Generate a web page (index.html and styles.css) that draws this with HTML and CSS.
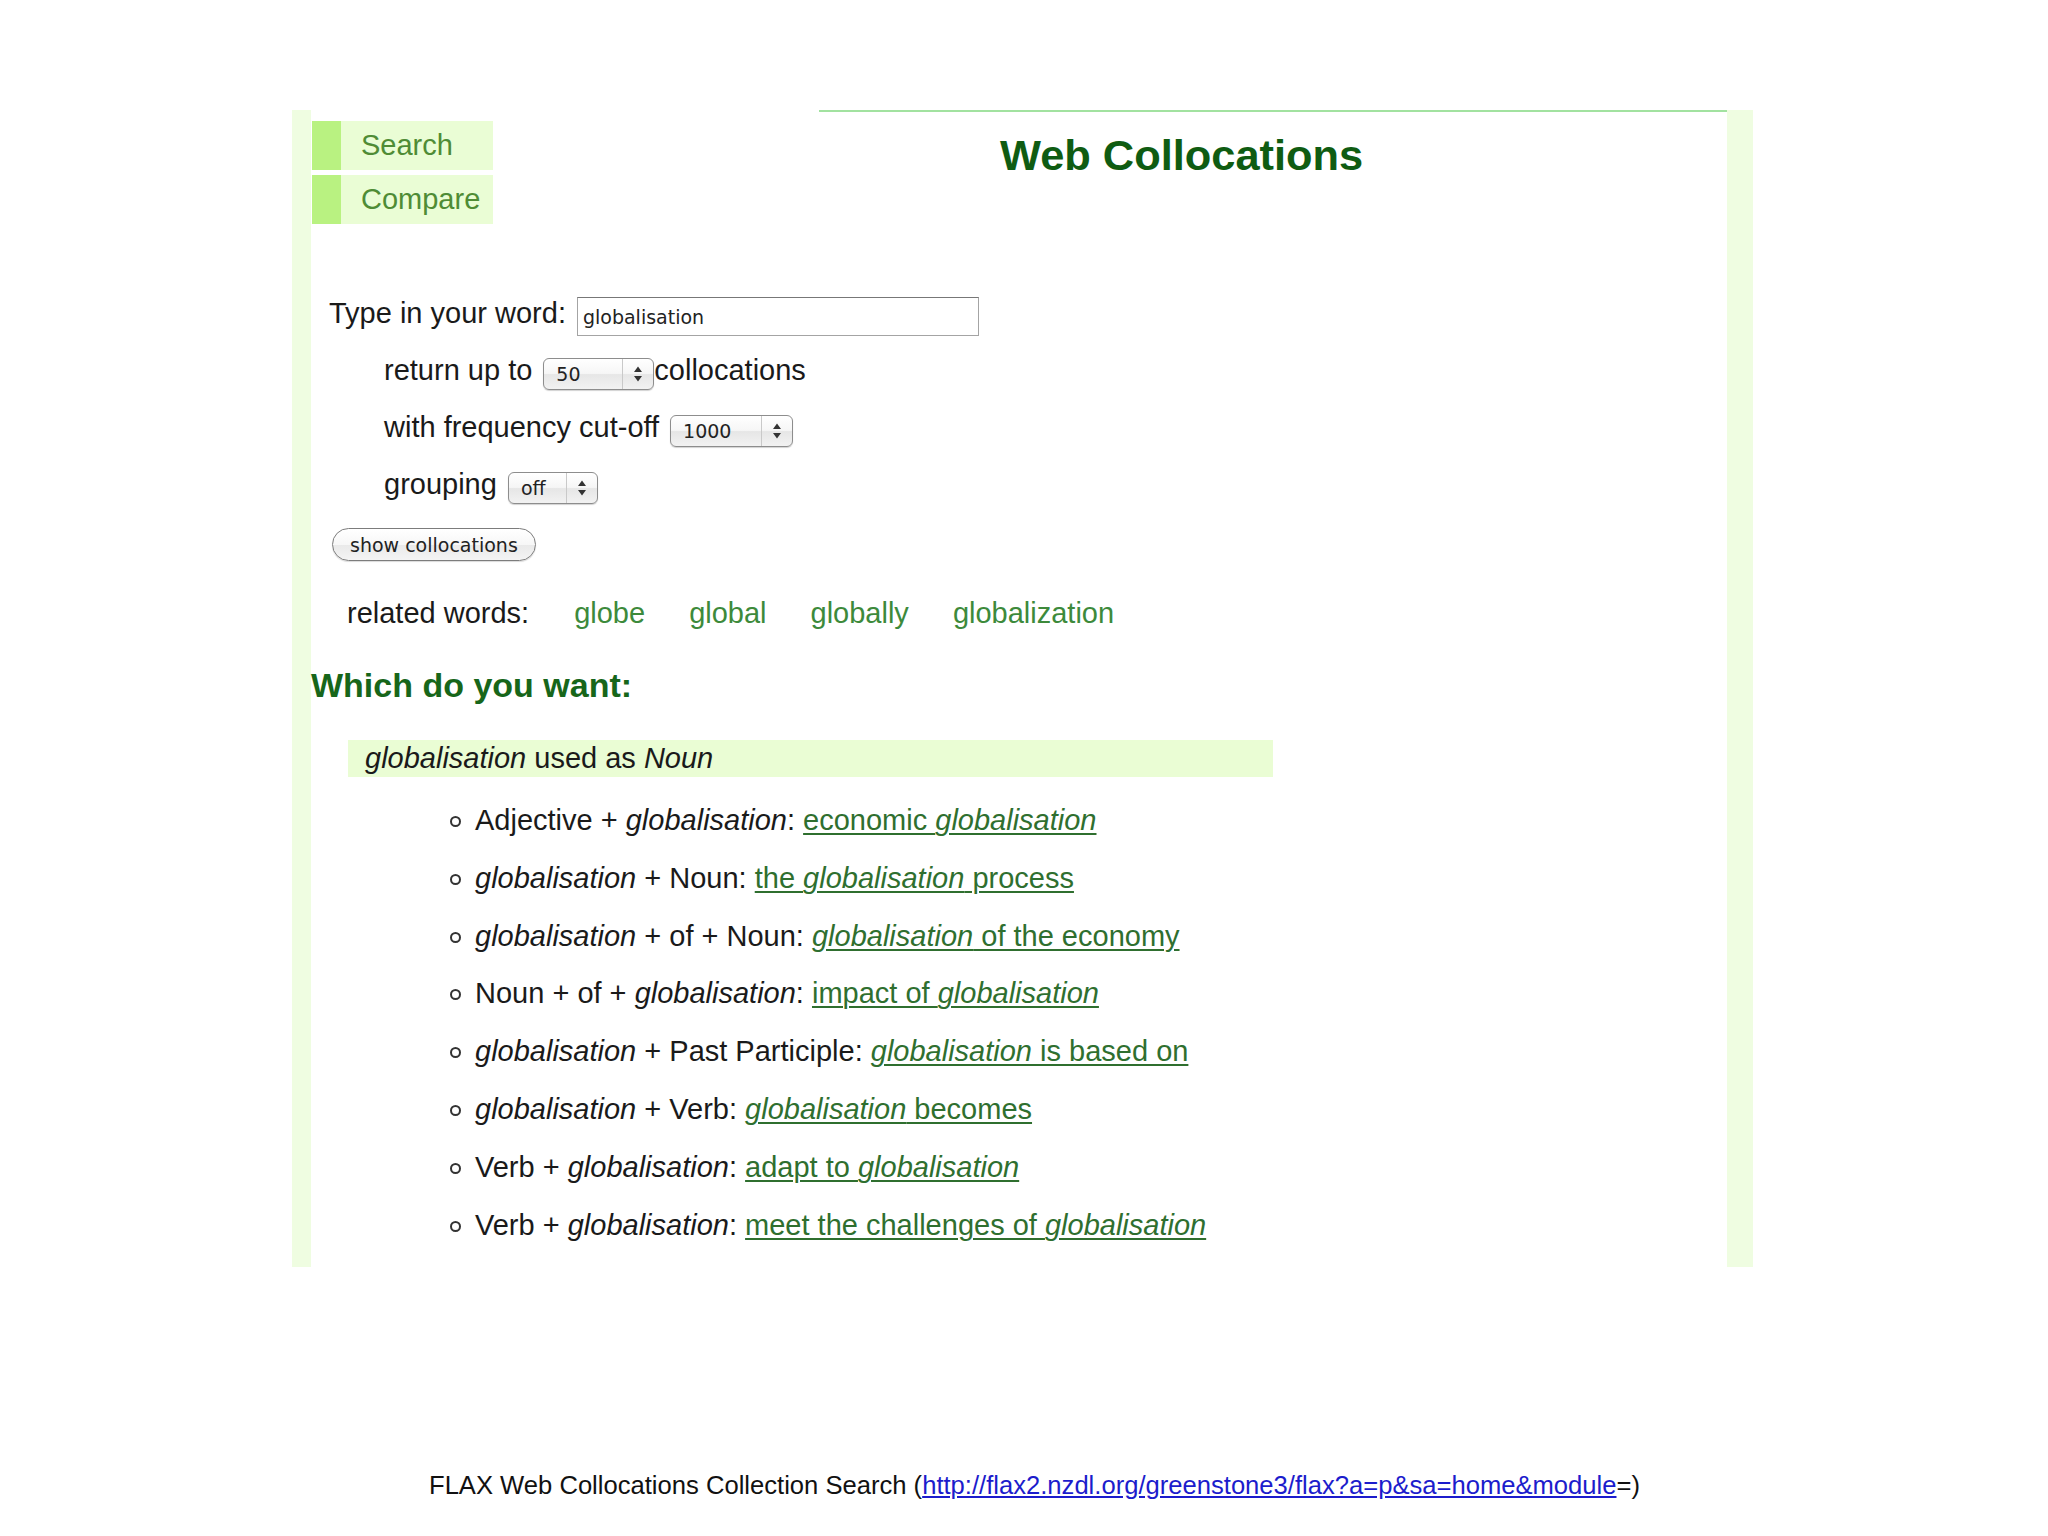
FILE: index.html
```html
<!DOCTYPE html>
<html lang="en">
<head>
<meta charset="utf-8">
<title>Web Collocations</title>
<link rel="stylesheet" href="styles.css">
</head>
<body>
<div class="frame">
  <div class="strip strip-left"></div>
  <div class="main">
    <div class="header">
      <nav class="menu">
        <a href="#">Search</a>
        <a href="#">Compare</a>
      </nav>
      <div class="titlebar">
        <h1>Web Collocations</h1>
      </div>
    </div>

    <form class="form">
      <div class="row first">
        <span class="label">Type in your word:</span>
        <input class="word-input" type="text" value="globalisation">
      </div>
      <div class="row">
        <span class="label">return up to</span>
        <span class="select sel-50">
          <select><option>50</option></select>
          <span class="arrows"><svg width="10" height="18" viewBox="0 0 10 18"><path d="M5 1.5 L9 7 L1 7 Z M5 16.5 L9 11 L1 11 Z" fill="#333"/></svg></span>
        </span>
        <span class="label after">collocations</span>
      </div>
      <div class="row">
        <span class="label">with frequency cut-off</span>
        <span class="select sel-1000">
          <select><option>1000</option></select>
          <span class="arrows"><svg width="10" height="18" viewBox="0 0 10 18"><path d="M5 1.5 L9 7 L1 7 Z M5 16.5 L9 11 L1 11 Z" fill="#333"/></svg></span>
        </span>
      </div>
      <div class="row">
        <span class="label">grouping</span>
        <span class="select sel-off">
          <select><option>off</option></select>
          <span class="arrows"><svg width="10" height="18" viewBox="0 0 10 18"><path d="M5 1.5 L9 7 L1 7 Z M5 16.5 L9 11 L1 11 Z" fill="#333"/></svg></span>
        </span>
      </div>
      <div class="row first">
        <button type="button" class="btn">show collocations</button>
      </div>
    </form>

    <div class="related">
      <span class="label">related words:</span>
      <a href="#">globe</a>
      <a href="#">global</a>
      <a href="#">globally</a>
      <a href="#">globalization</a>
    </div>

    <h3 class="which">Which do you want:</h3>

    <div class="noun"><i>globalisation</i> used as <i>Noun</i></div>

    <ul class="patterns">
      <li>Adjective + <i>globalisation</i>: <a href="#">economic <i>globalisation</i></a></li>
      <li><i>globalisation</i> + Noun: <a href="#">the <i>globalisation</i> process</a></li>
      <li><i>globalisation</i> + of + Noun: <a href="#"><i>globalisation</i> of the economy</a></li>
      <li>Noun + of + <i>globalisation</i>: <a href="#">impact of <i>globalisation</i></a></li>
      <li><i>globalisation</i> + Past Participle: <a href="#"><i>globalisation</i> is based on</a></li>
      <li><i>globalisation</i> + Verb: <a href="#"><i>globalisation</i> becomes</a></li>
      <li>Verb + <i>globalisation</i>: <a href="#">adapt to <i>globalisation</i></a></li>
      <li>Verb + <i>globalisation</i>: <a href="#">meet the challenges of <i>globalisation</i></a></li>
    </ul>
  </div>
  <div class="strip strip-right"></div>
</div>

<p class="footer">FLAX Web Collocations Collection Search (<a href="#">http://flax2.nzdl.org/greenstone3/flax?a=p&amp;sa=home&amp;module</a>=)</p>
</body>
</html>
```

FILE: styles.css
```css
body {
  margin: 0;
  background: #ffffff;
  font-family: "Liberation Sans", Arial, sans-serif;
  color: #1a1a1a;
}

.frame {
  display: flex;
  margin: 110px 0 0 292px;
  width: 1461px;
  height: 1157px;
}

.strip {
  background: #effde1;
}

.strip-left {
  width: 19px;
}

.strip-right {
  width: 26px;
}

.main {
  flex: 1;
  display: flex;
  flex-direction: column;
}

/* header */
.header {
  display: flex;
}

.menu {
  width: 181px;
  margin: 11px 0 0 1px;
  display: flex;
  flex-direction: column;
  gap: 5px;
}

.menu a {
  display: flex;
  align-items: center;
  height: 49px;
  background: #eafdd5;
  border-left: 29px solid #b9f281;
  padding-left: 20px;
  color: #4f8c35;
  font-size: 29px;
  text-decoration: none;
}

.titlebar {
  flex: 1;
  margin-left: 326px;
  border-top: 2px solid #a2e2a0;
}

.titlebar h1 {
  margin: 18px 0 0 181px;
  font-size: 43.4px;
  line-height: 50px;
  font-weight: bold;
  color: #0f5c12;
}

/* form */
.form {
  margin: 64px 0 0;
}

.row {
  display: flex;
  align-items: center;
  height: 57px;
  padding-left: 73px;
}

.row.first {
  padding-left: 18px;
}

.label {
  font-size: 29px;
  line-height: 40px;
  padding-bottom: 7px;
  white-space: nowrap;
}

.label.after {
  margin-left: 0;
}

.word-input {
  width: 402px;
  height: 39px;
  box-sizing: border-box;
  margin: 0 0 0 11px;
  padding: 0 5px;
  border: 1px solid #a4a4a4;
  border-top-color: #777777;
  font-family: "DejaVu Sans", sans-serif;
  font-size: 19px;
  color: #222222;
  background: #ffffff;
}

.select {
  position: relative;
  display: inline-block;
  margin-left: 11px;
  height: 32px;
}

.select select {
  appearance: none;
  -webkit-appearance: none;
  height: 32px;
  box-sizing: border-box;
  border: 1px solid #8d8d8d;
  border-radius: 6px;
  background: linear-gradient(#ffffff 0%, #f6f6f6 48%, #e6e6e6 52%, #f2f2f2 100%);
  box-shadow: 0 1px 1px rgba(0, 0, 0, 0.18);
  font-family: "DejaVu Sans", sans-serif;
  font-size: 19px;
  color: #222222;
  padding: 0 0 0 12px;
  margin: 0;
}

.sel-50 select { width: 111px; }
.sel-1000 select { width: 123px; }
.sel-off select { width: 90px; }

.select .arrows {
  position: absolute;
  top: 1px;
  right: 1px;
  bottom: 1px;
  width: 30px;
  border-left: 1px solid #c9c9c9;
  display: flex;
  align-items: center;
  justify-content: center;
  pointer-events: none;
}

.btn {
  height: 33px;
  margin-left: 3px;
  padding: 0 17px;
  border: 1px solid #7c7c7c;
  border-radius: 17px;
  background: linear-gradient(#ffffff 0%, #f7f7f7 50%, #e9e9e9 51%, #f4f4f4 100%);
  box-shadow: 0 1px 1px rgba(0, 0, 0, 0.15);
  font-family: "DejaVu Sans", sans-serif;
  font-size: 19px;
  color: #222222;
}

/* related words */
.related {
  display: flex;
  align-items: center;
  gap: 44px;
  height: 80px;
  padding-left: 36px;
}

.related .label {
  padding-bottom: 0;
  margin-right: 1px;
}

.related a {
  font-size: 29px;
  line-height: 40px;
  color: #3d8a3b;
  text-decoration: none;
}

.which {
  margin: 12px 0 0;
  font-size: 34px;
  line-height: 40px;
  font-weight: bold;
  color: #17661a;
}

.noun {
  margin: 35px 0 0 37px;
  width: 925px;
  height: 37px;
  box-sizing: border-box;
  padding-left: 17px;
  background: #eafdd4;
  font-size: 29px;
  line-height: 37px;
  color: #1a1a1a;
}

.patterns {
  margin: 15px 0 0;
  padding-left: 137px;
  list-style: none;
}

.patterns li {
  font-size: 29px;
  line-height: 57.8px;
  white-space: nowrap;
}

.patterns li::before {
  content: "";
  display: inline-block;
  width: 11px;
  height: 11px;
  box-sizing: border-box;
  border: 2px solid #333333;
  border-radius: 50%;
  margin: 0 14px 0 2px;
  vertical-align: 3px;
}

.patterns a {
  color: #2f6f2f;
  text-decoration: underline;
  text-decoration-thickness: 2px;
  text-underline-offset: 3px;
}

.footer {
  margin: 203px 0 0;
  padding-left: 21px;
  text-align: center;
  font-size: 25.6px;
  line-height: 30px;
  color: #111111;
}

.footer a {
  color: #1c1ccc;
  text-decoration: underline;
}
```
